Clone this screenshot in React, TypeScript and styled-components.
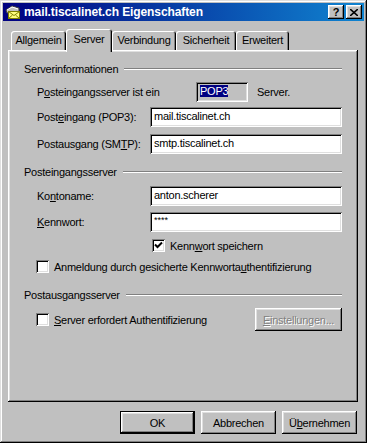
import React from "react";
import styled, { createGlobalStyle, css } from "styled-components";

const GlobalStyle = createGlobalStyle`
  html, body {
    margin: 0;
    padding: 0;
    background: #c0c0c0;
  }
  body {
    font-family: "Liberation Sans", Arial, sans-serif;
    font-size: 11px;
    letter-spacing: -0.25px;
    color: #000;
  }
`;

const raised = css`
  box-shadow: inset -1px -1px #000, inset 1px 1px #fff, inset -2px -2px #808080,
    inset 2px 2px #dfdfdf;
`;

const sunken = css`
  box-shadow: inset 1px 1px #808080, inset -1px -1px #fff, inset 2px 2px #000,
    inset -2px -2px #dfdfdf;
`;

const Window = styled.div`
  width: 367px;
  height: 443px;
  box-sizing: border-box;
  padding: 3px;
  background: #c0c0c0;
  display: flex;
  flex-direction: column;
  box-shadow: inset -1px -1px #000, inset 1px 1px #dfdfdf, inset -2px -2px #808080,
    inset 2px 2px #fff;
`;

const TitleBar = styled.div`
  height: 18px;
  display: flex;
  align-items: center;
  padding: 0 2px 0 2px;
  background: linear-gradient(to right, #000080, #1084d0);
  color: #fff;
`;

const TitleText = styled.span`
  font-weight: bold;
  font-size: 12px;
  letter-spacing: -0.1px;
  margin-left: 3px;
  flex: 1;
  white-space: nowrap;
`;

const TitleButton = styled.div<{ $gap?: number }>`
  width: 16px;
  height: 14px;
  box-sizing: border-box;
  background: #c0c0c0;
  ${raised};
  display: flex;
  align-items: center;
  justify-content: center;
  color: #000;
  font-weight: bold;
  font-size: 11px;
  letter-spacing: 0;
  margin-left: ${(p) => p.$gap ?? 0}px;
`;

const Body = styled.div`
  flex: 1;
  display: flex;
  flex-direction: column;
  padding: 8px 6px 6px 5px;
`;

const TabRow = styled.div`
  height: 21px;
  display: flex;
  align-items: flex-end;
  padding-left: 3px;
`;

const Tab = styled.div<{ $w: number; $active?: boolean }>`
  width: ${(p) => p.$w}px;
  height: ${(p) => (p.$active ? 23 : 19)}px;
  margin-bottom: ${(p) => (p.$active ? -2 : 0)}px;
  box-sizing: border-box;
  display: flex;
  justify-content: center;
  padding-top: ${(p) => (p.$active ? 4 : 3)}px;
  background: #c0c0c0;
  border-radius: 3px 3px 0 0;
  position: relative;
  z-index: ${(p) => (p.$active ? 1 : 0)};
  box-shadow: inset 1px 1px #fff, inset -1px 0 #000, inset -2px 0 #808080;
  white-space: nowrap;
`;

const Panel = styled.div`
  height: 352px;
  box-sizing: border-box;
  padding: 12px 16px;
  box-shadow: inset -1px -1px #000, inset 1px 1px #fff, inset -2px -2px #808080,
    inset 2px 2px #dfdfdf;
  display: flex;
  flex-direction: column;
`;

const GroupHeader = styled.div<{ $mt?: number }>`
  height: 14px;
  display: flex;
  align-items: center;
  margin-top: ${(p) => p.$mt ?? 0}px;
`;

const GroupLine = styled.div`
  flex: 1;
  margin-left: 6px;
  border-top: 1px solid #808080;
  border-bottom: 1px solid #fff;
`;

const Row = styled.div<{ $mt: number; $indent?: number; $h?: number }>`
  height: ${(p) => p.$h ?? 20}px;
  margin-top: ${(p) => p.$mt}px;
  padding-left: ${(p) => p.$indent ?? 13}px;
  display: flex;
  align-items: center;
`;

const Label = styled.span<{ $w?: number; $ml?: number }>`
  width: ${(p) => (p.$w ? `${p.$w}px` : "auto")};
  margin-left: ${(p) => p.$ml ?? 0}px;
  flex-shrink: 0;
  white-space: nowrap;
`;

const Field = styled.div<{ $w: number; $readonly?: boolean }>`
  width: ${(p) => p.$w}px;
  height: 20px;
  box-sizing: border-box;
  padding: 3px 3px 0 4px;
  background: ${(p) => (p.$readonly ? "#c0c0c0" : "#fff")};
  ${sunken};
  white-space: nowrap;
  overflow: hidden;
`;

const Selected = styled.span`
  background: #000080;
  color: #fff;
`;

const Masked = styled.span`
  font-size: 9px;
  letter-spacing: 0px;
  position: relative;
  top: -2px;
`;

const BoxWrap = styled.label`
  display: flex;
  align-items: center;
  gap: 5px;
  white-space: nowrap;
`;

const Box = styled.span`
  width: 13px;
  height: 13px;
  box-sizing: border-box;
  background: #fff;
  ${sunken};
  display: flex;
  align-items: center;
  justify-content: center;
  flex-shrink: 0;
`;

const Button = styled.div<{ $w: number; $default?: boolean; $disabled?: boolean }>`
  width: ${(p) => p.$w}px;
  height: 23px;
  box-sizing: border-box;
  display: flex;
  align-items: center;
  justify-content: center;
  background: #c0c0c0;
  white-space: nowrap;
  ${(p) =>
    p.$default
      ? css`
          border: 1px solid #000;
          ${raised};
        `
      : raised};
  ${(p) =>
    p.$disabled &&
    css`
      color: #808080;
      text-shadow: 1px 1px #fff;
    `}
`;

const Spacer = styled.div`
  flex: 1;
`;

const ButtonRow = styled.div`
  display: flex;
  justify-content: flex-end;
  gap: 6px;
  margin-top: 9px;
  padding-right: 1px;
`;

const U = styled.u`
  text-decoration: underline;
  text-underline-offset: 1px;
`;

function Check({ checked, children }: { checked?: boolean; children: React.ReactNode }) {
  return (
    <BoxWrap>
      <Box>
        {checked && (
          <svg width="9" height="9" viewBox="0 0 9 9">
            <path d="M1 3.5 L3.5 6 L8 1.5" stroke="#000" strokeWidth="2" fill="none" />
          </svg>
        )}
      </Box>
      <span>{children}</span>
    </BoxWrap>
  );
}

function MailIcon() {
  return (
    <svg width="16" height="16" viewBox="0 0 16 16">
      <path d="M1 6 L7 2 L14 4 L14 8 L2 9 Z" fill="#c0c0c0" stroke="#404040" strokeWidth="1" />
      <path d="M2 6 L7 3 L13 5" stroke="#fff" fill="none" strokeWidth="1" />
      <rect x="3.5" y="7.5" width="11" height="7" fill="#ffff80" stroke="#808000" />
      <path d="M3.5 7.5 L9 11.5 L14.5 7.5 M3.5 14.5 L7.5 11 M14.5 14.5 L10.5 11" stroke="#808000" fill="none" />
    </svg>
  );
}

export default function App() {
  return (
    <>
      <GlobalStyle />
      <Window>
        <TitleBar>
          <MailIcon />
          <TitleText>mail.tiscalinet.ch Eigenschaften</TitleText>
          <TitleButton>?</TitleButton>
          <TitleButton $gap={2}>
            <svg width="8" height="7" viewBox="0 0 8 7">
              <path d="M0 0 L8 7 M8 0 L0 7" stroke="#000" strokeWidth="1.6" />
            </svg>
          </TitleButton>
        </TitleBar>
        <Body>
          <TabRow>
            <Tab $w={55}>Allgemein</Tab>
            <Tab $w={46} $active>
              Server
            </Tab>
            <Tab $w={64}>Verbindung</Tab>
            <Tab $w={60}>Sicherheit</Tab>
            <Tab $w={53}>Erweitert</Tab>
          </TabRow>
          <Panel>
            <GroupHeader>
              Serverinformationen
              <GroupLine />
            </GroupHeader>
            <Row $mt={6}>
              <Label $w={159}>
                P<U>o</U>steingangsserver ist ein
              </Label>
              <Field $w={52} $readonly>
                <Selected>POP3</Selected>
              </Field>
              <Label $ml={9}>Server.</Label>
            </Row>
            <Row $mt={5}>
              <Label $w={113}>
                Post<U>e</U>ingang (POP3):
              </Label>
              <Field $w={192}>mail.tiscalinet.ch</Field>
            </Row>
            <Row $mt={7}>
              <Label $w={113}>
                Postausgang (SM<U>T</U>P):
              </Label>
              <Field $w={192}>smtp.tiscalinet.ch</Field>
            </Row>

            <GroupHeader $mt={11}>
              Posteingangsserver
              <GroupLine />
            </GroupHeader>
            <Row $mt={7}>
              <Label $w={113}>
                Ko<U>n</U>toname:
              </Label>
              <Field $w={192}>anton.scherer</Field>
            </Row>
            <Row $mt={6}>
              <Label $w={113}>
                <U>K</U>ennwort:
              </Label>
              <Field $w={192}>
                <Masked>****</Masked>
              </Field>
            </Row>
            <Row $mt={7} $h={13} $indent={128}>
              <Check checked>
                Kenn<U>w</U>ort speichern
              </Check>
            </Row>
            <Row $mt={8} $h={13} $indent={12}>
              <Check>
                Anmeldung durch gesicherte Kennworta<U>u</U>thentifizierung
              </Check>
            </Row>

            <GroupHeader $mt={15}>
              Postausgangsserver
              <GroupLine />
            </GroupHeader>
            <Row $mt={6} $h={23} $indent={12}>
              <Check>
                <U>S</U>erver erfordert Authentifizierung
              </Check>
              <Spacer />
              <Button $w={87} $disabled>
                <U>E</U>instellungen...
              </Button>
            </Row>
          </Panel>
          <ButtonRow>
            <Button $w={75} $default>
              OK
            </Button>
            <Button $w={75}>Abbrechen</Button>
            <Button $w={75}>
              Ü<U>b</U>ernehmen
            </Button>
          </ButtonRow>
        </Body>
      </Window>
    </>
  );
}
